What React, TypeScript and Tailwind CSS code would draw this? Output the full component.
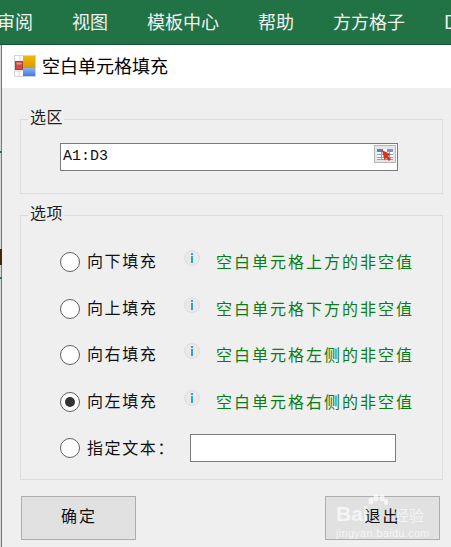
const cjk = 'font-["Noto_Sans_CJK_SC","Liberation_Sans",sans-serif]'

const options = [
  { label: '向下填充', hint: '空白单元格上方的非空值', checked: false },
  { label: '向上填充', hint: '空白单元格下方的非空值', checked: false },
  { label: '向右填充', hint: '空白单元格左侧的非空值', checked: false },
  { label: '向左填充', hint: '空白单元格右侧的非空值', checked: true },
]

function AppIcon() {
  return (
    <svg width="22" height="22" viewBox="0 0 22 22" className="shrink-0">
      <defs>
        <linearGradient id="gold" x1="0" y1="0" x2="0" y2="1">
          <stop offset="0" stopColor="#f0b800" />
          <stop offset="1" stopColor="#d99a00" />
        </linearGradient>
        <linearGradient id="blue" x1="0" y1="0" x2="0" y2="1">
          <stop offset="0" stopColor="#8db4f2" />
          <stop offset="1" stopColor="#3f78e0" />
        </linearGradient>
      </defs>
      <rect x="0.5" y="0.5" width="21" height="21" fill="#fff" stroke="#d4d4d4" />
      <rect x="1.5" y="6.5" width="7" height="8" fill="#cf4a42" stroke="#b03a34" />
      <rect x="2.5" y="7.5" width="5" height="2" fill="#e8938c" />
      <rect x="9" y="1" width="12" height="12" fill="url(#gold)" />
      <rect x="9" y="13" width="12" height="8" fill="url(#blue)" />
      <path d="M6 1v5M1 16h8M5 16v5" stroke="#d4d4d4" fill="none" />
    </svg>
  )
}

function RangeIcon() {
  return (
    <svg width="22" height="18" viewBox="0 0 22 18" className="absolute right-[1px] top-[1px]">
      <rect x="0.5" y="0.5" width="21" height="17" fill="#e6e6e6" stroke="#b8b8b8" />
      <rect x="3" y="4" width="16" height="11" fill="#fff" />
      <rect x="3" y="4" width="6" height="3" fill="#5b7fc0" />
      <rect x="13" y="4" width="6" height="3" fill="#7d98c8" />
      <path d="M3 9.5h16M3 12.5h16M3 14.5h16M7.5 7v8M15.5 7v8" stroke="#86a0d0" fill="none" />
      <path d="M8 5l9 4.5-3 1.5 3 3-2 2-3-3-1.5 2.5z" fill="#d4351f" />
    </svg>
  )
}

function InfoIcon() {
  return (
    <svg width="16" height="16" viewBox="0 0 16 16" className="shrink-0 -translate-y-1">
      <circle cx="8" cy="8" r="7.5" fill="#e9e9e9" stroke="#dedede" />
      <rect x="7" y="3" width="2" height="2" fill="#2aa3dc" />
      <rect x="7" y="6" width="2" height="7" fill="#2aa3dc" />
    </svg>
  )
}

function Radio({ checked }: { checked?: boolean }) {
  return (
    <span className="w-5 h-5 shrink-0 rounded-full border border-[#5f5f5f] bg-white flex items-center justify-center">
      {checked && <span className="w-[10px] h-[10px] rounded-full bg-[#333]" />}
    </span>
  )
}

function Legend({ children }: { children: string }) {
  return (
    <legend className="ml-[8px] px-[1px] h-6 leading-6 text-[16px] tracking-[0.5px] text-[#222]">
      <span className="block -translate-y-[3px]">{children}</span>
    </legend>
  )
}

export default function App() {
  return (
    <div className={`w-[451px] h-[547px] overflow-hidden flex flex-col bg-[#efefef] ${cjk}`}>
      {/* Excel ribbon tabs */}
      <div className="h-[45px] shrink-0 pb-[2px] bg-[#217346] border-b border-[#1b4f35] flex items-center -ml-[3px] gap-[39px] text-[18px] text-[#f2f2f2] whitespace-nowrap overflow-hidden">
        <span>审阅</span>
        <span>视图</span>
        <span>模板中心</span>
        <span>帮助</span>
        <span>方方格子</span>
        <span>DIY工具箱</span>
      </div>

      <div className="flex flex-1 min-h-0">
        {/* sheet behind the dialog */}
        <div className="relative w-[2px] shrink-0 bg-[#d8d8d8] border-r border-[#777]">
          <span className="absolute left-0 top-[106px] w-[2px] h-[2px] bg-[#1d7a45]" />
          <span className="absolute left-0 top-[204px] w-[2px] h-[16px] bg-[#3a2a10]" />
          <span className="absolute left-0 top-[232px] w-[2px] h-[2px] bg-[#1d7a45]" />
        </div>

        <div className="flex-1 min-w-0 flex flex-col">
          <div className="h-[43px] shrink-0 pb-[2px] bg-white flex items-center pl-[12px] gap-[6px] text-[18px] text-black">
            <AppIcon />
            <span>空白单元格填充</span>
          </div>

          <div className="relative flex-1 pt-[19px] pl-[18px] pr-[8px] flex flex-col">
            <fieldset className="border border-[#dcdcdc] pt-[12px] pb-[22px]">
              <Legend>选区</Legend>
              <div className="ml-[39px] relative w-[338px] h-[28px] bg-white border border-[#7a7a7a] flex items-center pl-[2px] font-['Liberation_Mono',monospace] text-[15px] text-[#111]">
                A1:D3
                <RangeIcon />
              </div>
            </fieldset>

            <fieldset className="mt-[9px] border border-[#dcdcdc] pl-0 pt-[12px] pb-[7px]">
              <Legend>选项</Legend>
              <div className="pl-[39px]">
                {options.map((o) => (
                  <div key={o.label} className="h-[46.5px] flex items-center text-[16px] tracking-[1.6px]">
                    <Radio checked={o.checked} />
                    <span className="ml-[7px] w-[97px] text-[#111] -translate-y-[2px]">{o.label}</span>
                    <InfoIcon />
                    <span className="ml-[16px] text-[#0b7d18] tracking-[2px] -translate-y-[1px]">{o.hint}</span>
                  </div>
                ))}
                <div className="h-[46.5px] flex items-center text-[16px] tracking-[1.6px]">
                  <Radio />
                  <span className="ml-[7px] w-[103px] text-[#111] -translate-y-[1px]">指定文本：</span>
                  <div className="w-[206px] h-[28px] bg-white border border-[#7a7a7a]" />
                </div>
              </div>
            </fieldset>

            <div className="mt-[16px] flex justify-between pl-[1px] pr-[3px]">
              <button className="w-[115px] h-[44px] pb-[5px] pl-[1px] bg-[#e1e1e1] border border-[#adadad] text-[16px] tracking-[2px] text-[#111]">
                确定
              </button>
              <button className="w-[115px] h-[44px] pb-[5px] bg-[#e1e1e1] border border-[#adadad] text-[16px] tracking-[2px] text-[#111]">
                退出
              </button>
            </div>

            {/* Baidu jingyan watermark */}
            <div className="absolute left-[331px] bottom-[5px] w-[110px] h-[48px] text-white/70 pointer-events-none">
              <svg width="24" height="14" viewBox="0 0 24 14" className="absolute left-[32px] top-0" fill="currentColor">
                <ellipse cx="6" cy="7" rx="2.5" ry="3.5" />
                <ellipse cx="11" cy="4" rx="2.5" ry="3.5" />
                <ellipse cx="17" cy="4" rx="2.5" ry="3.5" />
                <ellipse cx="21" cy="8" rx="2" ry="3" />
              </svg>
              <span className="absolute left-[3px] top-[8px] font-['Liberation_Sans',sans-serif] font-bold text-[21px] leading-6">Bai</span>
              <span className="absolute left-[61px] top-[9px] text-[15px] leading-6 text-white/60">经验</span>
              <span className="absolute left-[3px] top-[31px] font-['Liberation_Sans',sans-serif] text-[11px] leading-4 tracking-[0.3px] text-white/70">jingyan.baidu.com</span>
            </div>
          </div>
        </div>
      </div>
    </div>
  )
}
